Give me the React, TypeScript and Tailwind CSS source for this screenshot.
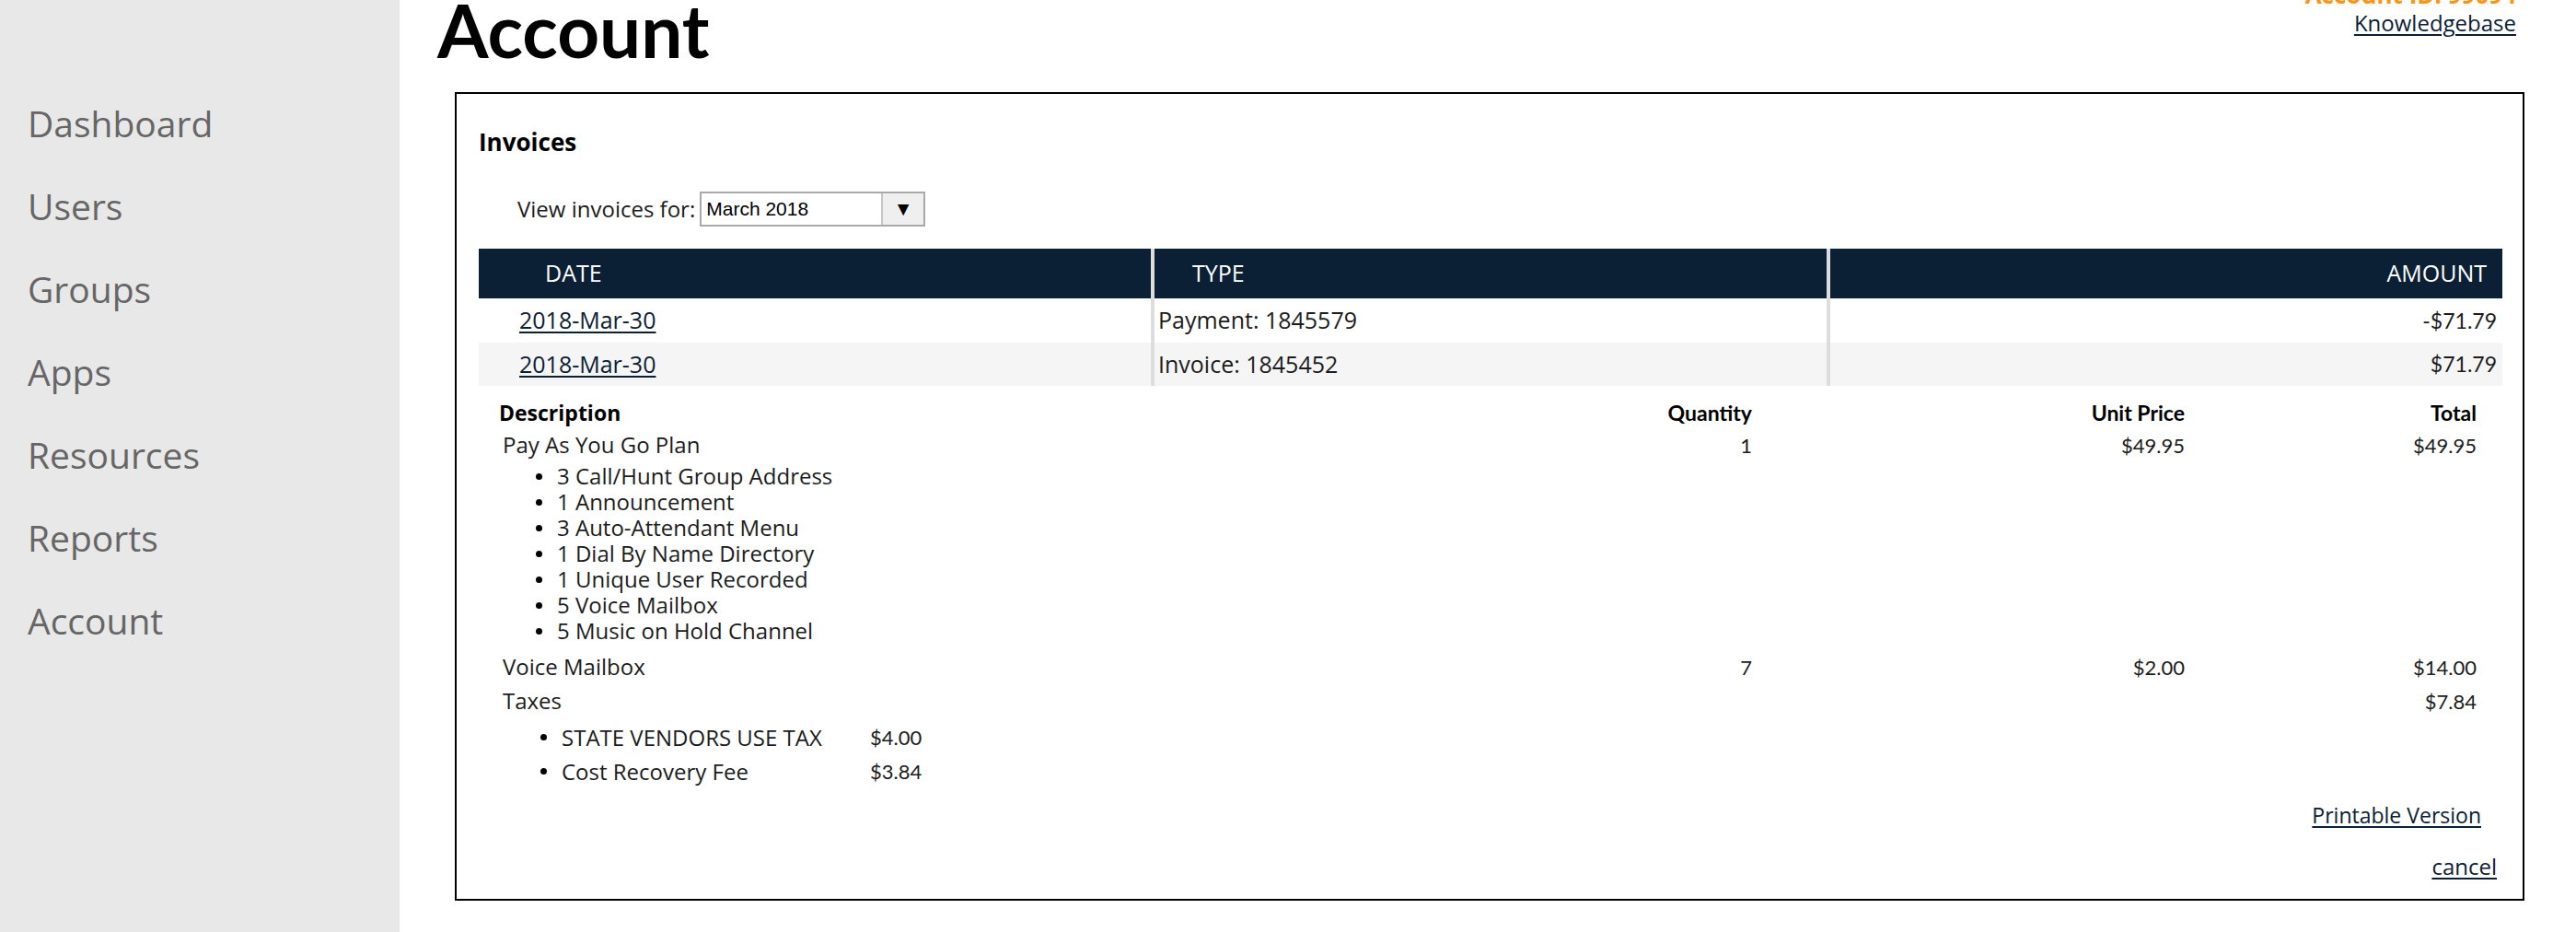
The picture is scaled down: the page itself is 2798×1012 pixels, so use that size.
import React from "react";

const navItems = ["Dashboard", "Users", "Groups", "Apps", "Resources", "Reports", "Account"];

const invoices = [
  { date: "2018-Mar-30", type: "Payment: 1845579", amount: "-$71.79", bg: "bg-white", h: "h-[48px]" },
  { date: "2018-Mar-30", type: "Invoice: 1845452", amount: "$71.79", bg: "bg-[#f5f5f5]", h: "h-[47px]" },
];

const planItems = [
  "3 Call/Hunt Group Address",
  "1 Announcement",
  "3 Auto-Attendant Menu",
  "1 Dial By Name Directory",
  "1 Unique User Recorded",
  "5 Voice Mailbox",
  "5 Music on Hold Channel",
];

const taxes = [
  { name: "STATE VENDORS USE TAX", amount: "$4.00" },
  { name: "Cost Recovery Fee", amount: "$3.84" },
];

// one row of the invoice detail grid
function DetailRow({
  label,
  qty,
  unit,
  total,
  className = "",
}: {
  label: React.ReactNode;
  qty?: string;
  unit?: string;
  total?: string;
  className?: string;
}) {
  return (
    <div className={`grid h-[30px] grid-cols-[1fr_163px_470px_317px] items-center ${className}`}>
      <div className="pl-[4px] text-[24px]">{label}</div>
      <div className="text-right font-['Lato',sans-serif] text-[22px]">{qty}</div>
      <div className="text-right font-['Lato',sans-serif] text-[22px]">{unit}</div>
      <div className="text-right font-['Lato',sans-serif] text-[22px]">{total}</div>
    </div>
  );
}

export default function App() {
  return (
    <div className="flex min-h-[1012px] w-full bg-white font-['Open_Sans',sans-serif] text-[#1c1c1c]">
      {/* Sidebar */}
      <aside className="w-[434px] shrink-0 bg-[#e8e8e8] pl-[30px] pt-[89px]">
        {navItems.map((item) => (
          <div key={item} className="text-[39px] leading-[90px] text-[#666666]">
            {item}
          </div>
        ))}
      </aside>

      {/* Main */}
      <main className="flex-1 pl-[41px] pr-[56px]">
        <div className="flex items-start justify-between pr-[9px]">
          <h1 className="-mt-[8px] font-['Lato',sans-serif] text-[80px] font-bold leading-[80px] text-black">
            Account
          </h1>
          <div className="-mt-[21px] flex flex-col items-end">
            <span className="text-[26px] font-bold leading-[30px] text-[#f7941d]">Account ID: 99094</span>
            <a href="#" className="text-[24px] leading-[32px] text-[#0b2035] underline decoration-2 underline-offset-[3px]">
              Knowledgebase
            </a>
          </div>
        </div>

        <section className="ml-[19px] mt-[28px] border-2 border-black pb-[20px] pl-[24px] pr-[22px] pt-[36px]">
          <h2 className="text-[26px] font-bold leading-[32px] text-black">Invoices</h2>

          {/* Month selector */}
          <div className="mt-[38px] flex h-[38px] items-center pl-[42px]">
            <span className="text-[24px]">View invoices for:</span>
            <div className="ml-[5px] flex h-[38px] w-[245px] border-2 border-[#a9a9a9]">
              <span className="flex flex-1 items-center pl-[5px] font-['Liberation_Sans',sans-serif] text-[21px] text-black">
                March 2018
              </span>
              <span className="flex w-[46px] items-center justify-center border-l-2 border-[#c6c6c6] bg-[#efefef] text-[21px] text-black">
                ▼
              </span>
            </div>
          </div>

          {/* Invoice table */}
          <div className="mt-[24px] grid grid-cols-3 gap-x-[4px] bg-[#dddddd]">
            <div className="flex h-[54px] items-center bg-[#0c2035] pl-[72px] text-[25px] text-white">DATE</div>
            <div className="flex h-[54px] items-center bg-[#0c2035] pl-[41px] text-[25px] text-white">TYPE</div>
            <div className="flex h-[54px] items-center justify-end bg-[#0c2035] pr-[17px] text-[25px] text-white">AMOUNT</div>
            {invoices.map((inv, i) => (
              <React.Fragment key={i}>
                <div className={`flex items-center pl-[44px] ${inv.h} ${inv.bg}`}>
                  <a href="#" className="text-[25px] text-[#0b2035] underline decoration-2 underline-offset-[3px]">
                    {inv.date}
                  </a>
                </div>
                <div className={`flex items-center pl-[4px] text-[25px] ${inv.h} ${inv.bg}`}>{inv.type}</div>
                <div className={`flex items-center justify-end pr-[6px] font-['Lato',sans-serif] text-[23px] ${inv.h} ${inv.bg}`}>
                  {inv.amount}
                </div>
              </React.Fragment>
            ))}
          </div>

          {/* Invoice detail */}
          <div className="mt-[12px] pl-[22px] pr-[28px]">
            <div className="grid h-[30px] grid-cols-[1fr_163px_470px_317px] items-center">
              <div className="text-[23px] font-bold text-black">Description</div>
              <div className="text-right font-['Lato',sans-serif] text-[23px] font-bold text-black">Quantity</div>
              <div className="text-right font-['Lato',sans-serif] text-[23px] font-bold text-black">Unit Price</div>
              <div className="text-right font-['Lato',sans-serif] text-[23px] font-bold text-black">Total</div>
            </div>

            <DetailRow className="mt-[4px]" label="Pay As You Go Plan" qty="1" unit="$49.95" total="$49.95" />

            <ul className="mt-[8px]">
              {planItems.map((item) => (
                <li key={item} className="flex h-[28px] items-center gap-[16px] pl-[40px] text-[24px]">
                  <span className="h-[7px] w-[7px] rounded-full bg-black" />
                  {item}
                </li>
              ))}
            </ul>

            <DetailRow className="mt-[7px]" label="Voice Mailbox" qty="7" unit="$2.00" total="$14.00" />
            <DetailRow className="mt-[7px]" label="Taxes" total="$7.84" />

            <ul className="mt-[9px]">
              {taxes.map((t) => (
                <li key={t.name} className="flex h-[37px] items-center pl-[45px]">
                  <span className="mr-[16px] h-[7px] w-[7px] rounded-full bg-black" />
                  <span className="w-[335px] text-[24px]">{t.name}</span>
                  <span className="font-['Lato',sans-serif] text-[22px]">{t.amount}</span>
                </li>
              ))}
            </ul>
          </div>

          <div className="mt-[14px] flex h-[30px] items-center justify-end pr-[23px]">
            <a href="#" className="text-[23px] text-[#0b2035] underline decoration-2 underline-offset-[3px]">
              Printable Version
            </a>
          </div>
          <div className="mt-[26px] flex h-[30px] items-center justify-end pr-[6px]">
            <a href="#" className="text-[24px] text-[#0b2035] underline decoration-2 underline-offset-[3px]">
              cancel
            </a>
          </div>
        </section>
      </main>
    </div>
  );
}
